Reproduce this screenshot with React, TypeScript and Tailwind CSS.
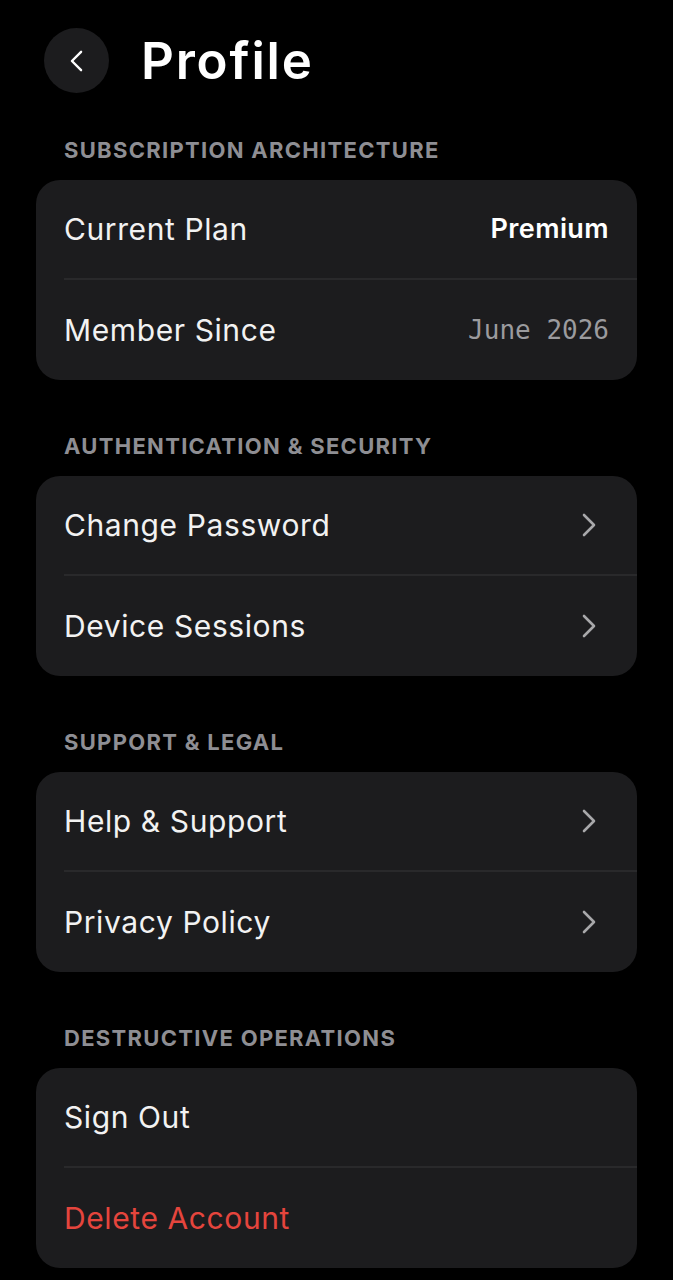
import React from "react";

interface Row {
  label: string;
  value?: string;
  kind?: "bold" | "mono" | "chevron" | "danger";
}

interface Section {
  title: string;
  rows: Row[];
}

const sections: Section[] = [
  {
    title: "Subscription Architecture",
    rows: [
      { label: "Current Plan", value: "Premium", kind: "bold" },
      { label: "Member Since", value: "June 2026", kind: "mono" },
    ],
  },
  {
    title: "Authentication & Security",
    rows: [
      { label: "Change Password", kind: "chevron" },
      { label: "Device Sessions", kind: "chevron" },
    ],
  },
  {
    title: "Support & Legal",
    rows: [
      { label: "Help & Support", kind: "chevron" },
      { label: "Privacy Policy", kind: "chevron" },
    ],
  },
  {
    title: "Destructive Operations",
    rows: [{ label: "Sign Out" }, { label: "Delete Account", kind: "danger" }],
  },
];

const Chevron: React.FC<{ left?: boolean; className?: string }> = ({ left, className }) => (
  <svg width="16" height="24" viewBox="0 0 16 24" fill="none" className={className}>
    <path
      d={left ? "M13 2 L3 12 L13 22" : "M3 2 L13 12 L3 22"}
      stroke="currentColor"
      strokeWidth="2.6"
      strokeLinecap="round"
      strokeLinejoin="round"
    />
  </svg>
);

const SettingsRow: React.FC<{ row: Row; last: boolean }> = ({ row, last }) => (
  <div className="pl-7">
    <div
      className={`flex h-[100px] items-center justify-between pr-7 ${
        last ? "" : "border-b-2 border-[#29292b]"
      }`}
    >
      <span
        className={`text-[30px] tracking-[0.6px] ${
          row.kind === "danger" ? "text-[#e5453d]" : "text-[#f2f2f2]"
        }`}
      >
        {row.label}
      </span>
      {row.kind === "bold" && (
        <span className="text-[27px] font-semibold tracking-[0.4px] text-white">{row.value}</span>
      )}
      {row.kind === "mono" && (
        <span
          className="text-[26px] text-[#9b9b9e]"
          style={{ fontFamily: '"DejaVu Sans Mono", monospace' }}
        >
          {row.value}
        </span>
      )}
      {row.kind === "chevron" && <Chevron className="mr-3 text-[#a8a8aa]" />}
    </div>
  </div>
);

export default function App() {
  return (
    <div
      className="min-h-[1280px] w-full bg-black px-9 pt-7 pb-3"
      style={{ fontFamily: 'Inter, "Noto Sans", sans-serif' }}
    >
      {/* Header */}
      <div className="flex items-center gap-8 pl-2">
        <button className="flex h-[65px] w-[65px] items-center justify-center rounded-full bg-[#1c1c1e]">
          <Chevron left className="h-[22px] w-[15px] text-white" />
        </button>
        <h1 className="text-[51px] font-semibold leading-none tracking-[1.8px] text-white">
          Profile
        </h1>
      </div>

      <div className="mt-[42px] flex flex-col">
        {sections.map((section, i) => (
          <div key={section.title} className={i === 0 ? "" : "mt-[51px]"}>
            <h2 className="mb-[15px] pl-7 text-[22px] font-bold uppercase leading-[30px] tracking-[1.3px] text-[#8e8e93]">
              {section.title}
            </h2>
            <div className="overflow-hidden rounded-[24px] bg-[#1c1c1e]">
              {section.rows.map((row, j) => (
                <SettingsRow key={row.label} row={row} last={j === section.rows.length - 1} />
              ))}
            </div>
          </div>
        ))}
      </div>
    </div>
  );
}
